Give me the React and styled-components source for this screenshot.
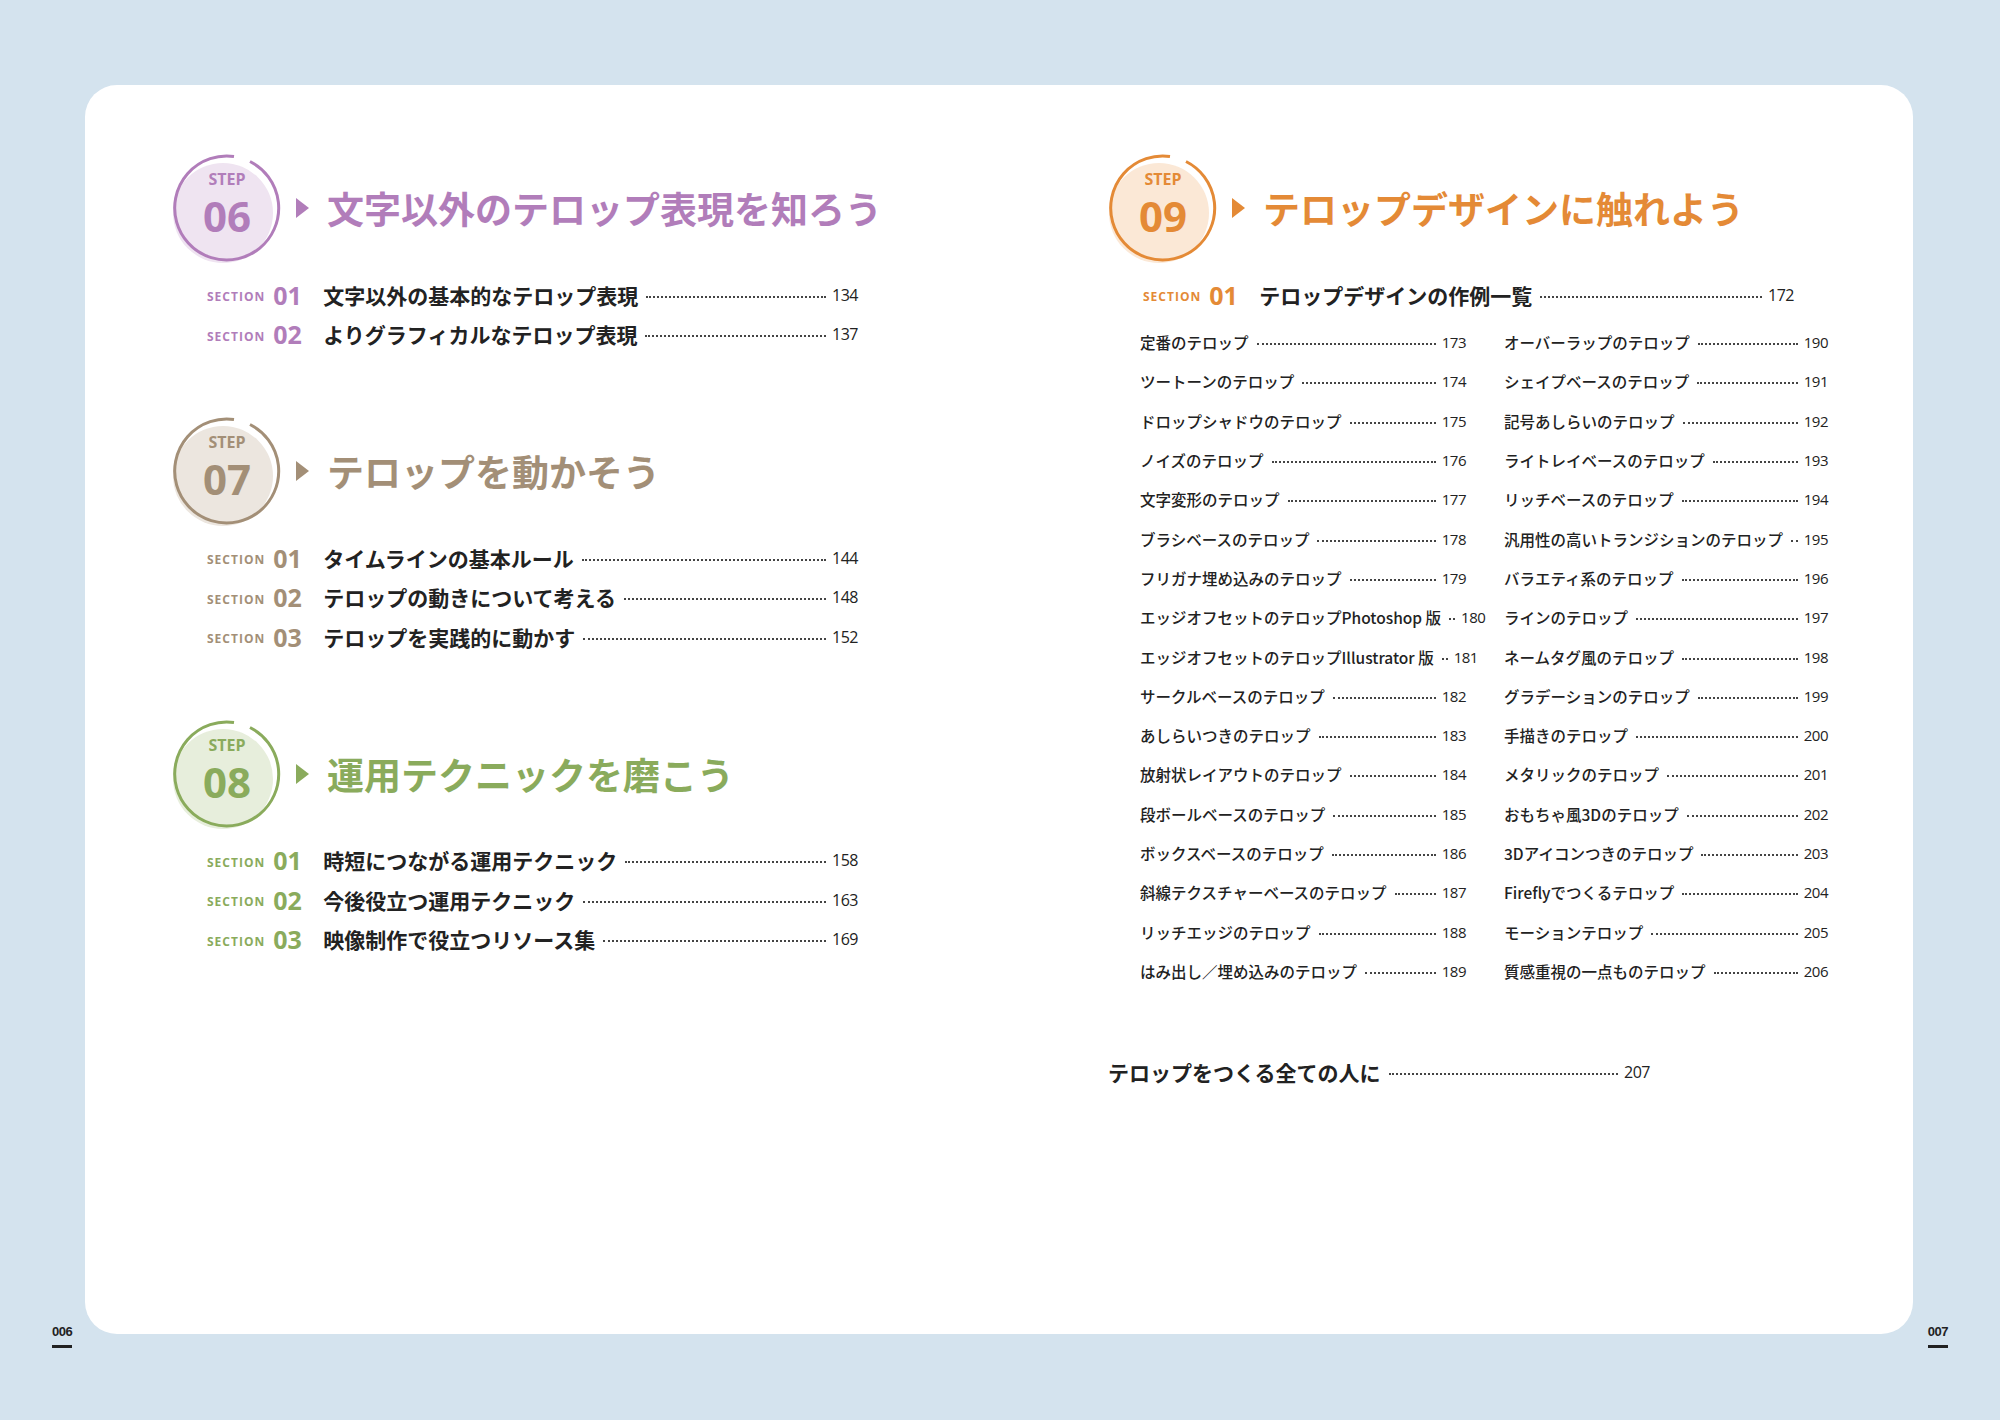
import React from 'react';
import styled, { createGlobalStyle } from 'styled-components';

const Global = createGlobalStyle`
  body { margin: 0; background: #d4e3ee; }
`;

const Page = styled.div`
  width: 2000px;
  height: 1420px;
  background: #d4e3ee;
  position: relative;
  font-family: "Noto Sans CJK JP", "Noto Sans", sans-serif;
  color: #222;
  box-sizing: border-box;
  padding: 85px 87px 0 85px;
`;

const Card = styled.div`
  background: #fff;
  border-radius: 32px;
  height: 1249px;
  padding: 68px 0 0 87px;
  box-sizing: border-box;
  display: grid;
  grid-template-columns: 936px 1fr;
`;

const Column = styled.div`
  display: flex;
  flex-direction: column;
`;

const StepBlock = styled.div`
  display: flex;
  flex-direction: column;
  margin-bottom: 62px;
`;

const Header = styled.div`
  display: flex;
  align-items: center;
  height: 110px;
  margin-bottom: 12px;
`;

const Triangle = styled.span`
  width: 0;
  height: 0;
  border-top: 10px solid transparent;
  border-bottom: 10px solid transparent;
  border-left: 13px solid ${({ color }) => color};
  margin: 0 18px 0 14px;
`;

const Title = styled.h2`
  margin: 0;
  font-size: 37px;
  font-weight: 700;
  color: ${({ color }) => color};
`;

const Row = styled.div`
  display: flex;
  align-items: center;
  height: 39.5px;
  width: 651px;
  margin-left: 35px;
`;

const SecLabel = styled.span`
  font-family: "Open Sans", sans-serif;
  font-weight: 700;
  font-size: 12px;
  letter-spacing: 1px;
  color: ${({ color }) => color};
  margin-right: 8px;
  padding-top: 4px;
`;

const SecNum = styled.span`
  font-family: "Open Sans", sans-serif;
  font-weight: 700;
  font-size: 25px;
  color: ${({ color }) => color};
  margin-right: 16px;
  width: 34px;
`;

const SecTitle = styled.span`
  font-size: ${({ size }) => size || 21}px;
  font-weight: 700;
  white-space: nowrap;
`;

const Dots = styled.span`
  flex: 1;
  border-bottom: 2px dotted #444;
  margin: 4px 6px 0 8px;
  min-width: 6px;
`;

const PageNo = styled.span`
  font-family: "Open Sans", sans-serif;
  font-size: ${({ size }) => size || 16}px;
  font-weight: 500;
  letter-spacing: -0.5px;
`;

const Grid = styled.div`
  display: grid;
  grid-template-columns: 326px 324px;
  column-gap: 38px;
  margin: 8px 0 0 32px;
`;

const Item = styled.div`
  display: flex;
  align-items: center;
  height: 39.3px;
  font-size: 15.5px;
  font-weight: 500;
  white-space: nowrap;
`;

const Final = styled.div`
  display: flex;
  align-items: center;
  width: 542px;
  height: 40px;
  margin-top: 61px;
`;

const Folio = styled.div`
  position: absolute;
  bottom: 72px;
  ${({ side }) => side}: 52px;
  font-family: "Liberation Sans", sans-serif;
  font-size: 13px;
  font-weight: 700;
  letter-spacing: -0.5px;
  padding-bottom: 6px;
  border-bottom: 3px solid #222;
`;

function Badge({ num, color, tint }) {
  return (
    <svg width="110" height="110" viewBox="0 0 110 110">
      <circle cx="51" cy="60" r="50" fill={tint} />
      <path d="M 78 8.5 A 52 52 0 1 1 62 3.5" fill="none" stroke={color} strokeWidth="3" />
      <text x="55" y="32" textAnchor="middle" fontFamily="Open Sans, sans-serif" fontWeight="700" fontSize="16" fill={color}>STEP</text>
      <text x="55" y="79" textAnchor="middle" fontFamily="Open Sans, sans-serif" fontWeight="700" fontSize="42" fill={color}>{num}</text>
    </svg>
  );
}

const steps = [
  { num: '06', color: '#b17dba', tint: '#efe4f1', title: '文字以外のテロップ表現を知ろう', secs: [['01', '文字以外の基本的なテロップ表現', 134], ['02', 'よりグラフィカルなテロップ表現', 137]] },
  { num: '07', color: '#a38f77', tint: '#ece6df', title: 'テロップを動かそう', secs: [['01', 'タイムラインの基本ルール', 144], ['02', 'テロップの動きについて考える', 148], ['03', 'テロップを実践的に動かす', 152]] },
  { num: '08', color: '#8aab5c', tint: '#e7eedc', title: '運用テクニックを磨こう', secs: [['01', '時短につながる運用テクニック', 158], ['02', '今後役立つ運用テクニック', 163], ['03', '映像制作で役立つリソース集', 169]] },
];

const leftItems = [
  ['定番のテロップ', 173], ['ツートーンのテロップ', 174], ['ドロップシャドウのテロップ', 175], ['ノイズのテロップ', 176],
  ['文字変形のテロップ', 177], ['ブラシベースのテロップ', 178], ['フリガナ埋め込みのテロップ', 179],
  ['エッジオフセットのテロップPhotoshop 版', 180], ['エッジオフセットのテロップIllustrator 版', 181],
  ['サークルベースのテロップ', 182], ['あしらいつきのテロップ', 183], ['放射状レイアウトのテロップ', 184],
  ['段ボールベースのテロップ', 185], ['ボックスベースのテロップ', 186], ['斜線テクスチャーベースのテロップ', 187],
  ['リッチエッジのテロップ', 188], ['はみ出し／埋め込みのテロップ', 189],
];
const rightItems = [
  ['オーバーラップのテロップ', 190], ['シェイプベースのテロップ', 191], ['記号あしらいのテロップ', 192],
  ['ライトレイベースのテロップ', 193], ['リッチベースのテロップ', 194], ['汎用性の高いトランジションのテロップ', 195],
  ['バラエティ系のテロップ', 196], ['ラインのテロップ', 197], ['ネームタグ風のテロップ', 198],
  ['グラデーションのテロップ', 199], ['手描きのテロップ', 200], ['メタリックのテロップ', 201],
  ['おもちゃ風3Dのテロップ', 202], ['3Dアイコンつきのテロップ', 203], ['Fireflyでつくるテロップ', 204],
  ['モーションテロップ', 205], ['質感重視の一点ものテロップ', 206],
];

const orange = '#e48a36';

export default function App() {
  const items = leftItems.flatMap((l, i) => [l, rightItems[i]]);
  return (
    <Page>
      <Global />
      <Card>
        <Column>
          {steps.map((s) => (
            <StepBlock key={s.num}>
              <Header>
                <Badge num={s.num} color={s.color} tint={s.tint} />
                <Triangle color={s.color} />
                <Title color={s.color}>{s.title}</Title>
              </Header>
              {s.secs.map(([n, t, p]) => (
                <Row key={n}>
                  <SecLabel color={s.color}>SECTION</SecLabel>
                  <SecNum color={s.color}>{n}</SecNum>
                  <SecTitle>{t}</SecTitle>
                  <Dots />
                  <PageNo>{p}</PageNo>
                </Row>
              ))}
            </StepBlock>
          ))}
        </Column>
        <Column>
          <Header>
            <Badge num="09" color={orange} tint="#fbe8d6" />
            <Triangle color={orange} />
            <Title color={orange}>テロップデザインに触れよう</Title>
          </Header>
          <Row>
            <SecLabel color={orange}>SECTION</SecLabel>
            <SecNum color={orange}>01</SecNum>
            <SecTitle>テロップデザインの作例一覧</SecTitle>
            <Dots />
            <PageNo>172</PageNo>
          </Row>
          <Grid>
            {items.map(([t, p]) => (
              <Item key={p}>
                <span>{t}</span>
                <Dots />
                <PageNo size={15}>{p}</PageNo>
              </Item>
            ))}
          </Grid>
          <Final>
            <SecTitle size={21}>テロップをつくる全ての人に</SecTitle>
            <Dots />
            <PageNo>207</PageNo>
          </Final>
        </Column>
      </Card>
      <Folio side="left">006</Folio>
      <Folio side="right">007</Folio>
    </Page>
  );
}
